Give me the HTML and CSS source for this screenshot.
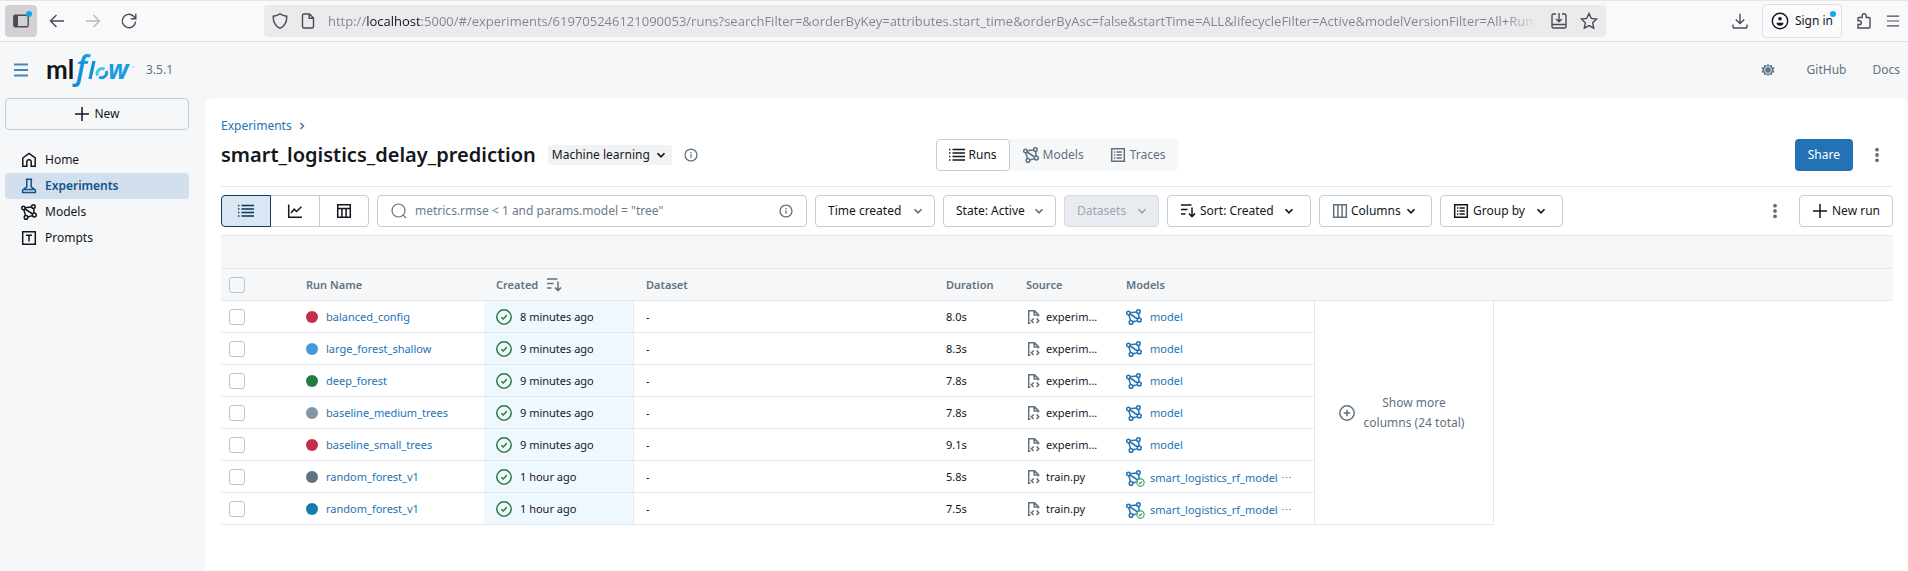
FILE: index.html
```html
<!DOCTYPE html>
<html lang="en">
<head>
<meta charset="utf-8">
<title>smart_logistics_delay_prediction - MLflow</title>
<link rel="stylesheet" href="styles.css">
</head>
<body>
<svg class="defs" aria-hidden="true">
  <symbol id="plus" viewBox="0 0 16 16"><path d="M8 1v14M1 8h14"/></symbol>
  <symbol id="home" viewBox="0 0 16 16"><path d="M1.8 6 8 1.5 14.2 6v8.2H10.2V10a2.2 2.2 0 0 0-4.4 0v4.2H1.8z"/></symbol>
  <symbol id="flask" viewBox="0 0 16 16"><path d="M4.8 1.2h6.4M5.8 1.5v7.3L1.6 12v2.4h12.8V12l-4.200-3.200V1.5M1.8 11.500h12.4"/></symbol>
  <symbol id="models" viewBox="0 0 16 16"><circle cx="2.4" cy="4" r="1.7"/><circle cx="12.4" cy="2.6" r="1.8"/><circle cx="13.3" cy="11" r="1.9"/><circle cx="5" cy="13.4" r="1.8"/><path d="M4.2 3.8 10.6 2.9M12.6 4.4l.5 4.7M11.5 11.6 6.7 13M4.6 11.6 2.8 5.8M3.9 5 11.7 10"/></symbol>
  <symbol id="prompt" viewBox="0 0 16 16"><path d="M1.7 1.7h12.6v12.6H1.7zM5 5.2h6M8 5.2V11.5"/></symbol>
  <symbol id="list" viewBox="0 0 16 16"><path d="M3.5 2.5H16M3.5 6H16M3.5 9.5H16M3.5 13H16M0 2.5h1.4M0 6h1.4M0 9.5h1.4M0 13h1.4"/></symbol>
  <symbol id="chart" viewBox="0 0 16 16"><path d="M1.7 1.5v12.8H15M4 10l3.2-3.8L9.5 8.5 14.5 3.8"/></symbol>
  <symbol id="grid" viewBox="0 0 16 16"><path d="M1.7 1.7h12.6v12.6H1.7zM1.7 5.5h12.6M5.9 5.5v8.8M10.1 5.5v8.8"/></symbol>
  <symbol id="columns" viewBox="0 0 16 16"><path d="M1.7 1.7h12.6v12.6H1.7zM5.9 1.7v12.6M10.1 1.7v12.6"/></symbol>
  <symbol id="listbox" viewBox="0 0 16 16"><path d="M1.7 1.7h12.6v12.6H1.7zM6.5 5h5.3M6.5 8h5.3M6.5 11h5.3M4 5h1.3M4 8h1.3M4 11h1.3"/></symbol>
  <symbol id="sort" viewBox="0 0 16 16"><path d="M1 2h10.5M1 6.5h6.5M1 11h4.5M12 4.5v9M8.9 10.4 12 13.6l3.1-3.2"/></symbol>
  <symbol id="search" viewBox="0 0 16 16"><circle cx="7.5" cy="7.5" r="6.5"/><path d="m12.2 12.2 2.9 2.9"/></symbol>
  <symbol id="info" viewBox="0 0 16 16"><circle cx="8" cy="8" r="6.8"/><path d="M8 7.2v4M8 4.6v1.5"/></symbol>
  <symbol id="down" viewBox="0 0 16 16"><path d="m4 6 4 4 4-4"/></symbol>
  <symbol id="right" viewBox="0 0 16 16"><path d="m6 4 4 4-4 4"/></symbol>
  <symbol id="kebab" viewBox="0 0 16 16"><g fill="currentColor" stroke="none"><circle cx="8" cy="2.7" r="1.9"/><circle cx="8" cy="8" r="1.9"/><circle cx="8" cy="13.3" r="1.9"/></g></symbol>
  <symbol id="check" viewBox="0 0 16 16"><circle cx="8" cy="8" r="7.2"/><path d="m5.3 8.2 1.9 1.8 3.6-3.7"/></symbol>
  <symbol id="file" viewBox="0 0 16 16"><path d="M4.5 14.2H2.7V1.7h5.8L12.5 5.6V7.5M8.2 1.9v4h4M7.6 9.5 5.4 11.8l2.2 2.3M10.6 9.5l2.2 2.3-2.2 2.3"/></symbol>
  <symbol id="pluscircle" viewBox="0 0 16 16"><circle cx="8" cy="8" r="7.2"/><path d="M8 4.7v6.6M4.7 8h6.6"/></symbol>
  <symbol id="badge" viewBox="0 0 16 16"><circle cx="8" cy="8" r="6.5" fill="#fff"/><path d="m5 8.2 2.2 2L11 6"/></symbol>
  <symbol id="menu" viewBox="0 0 16 16"><path d="M1 2.5h14M1 8h14M1 13.5h14"/></symbol>
  <symbol id="gear" viewBox="0 0 16 16"><g fill="currentColor" stroke="none"><path d="m8 .8 1.7 2.3 2.7-1.2.3 2.9 2.9.4L14.1 8l1.5 2.7-2.9.4-.3 3-2.7-1.2L8 15.2l-1.7-2.3-2.7 1.2-.3-3-2.9-.4L1.9 8 .4 5.2l2.9-.4.3-2.9 2.7 1.2z"/></g><circle cx="8" cy="8" r="3.9" stroke="#f6f7f9" stroke-width="1"/></symbol>
</svg>

<header class="browser">
  <button class="tool tool-on" aria-label="Sidebars"><svg class="ic20" viewBox="0 0 20 20"><rect x="2.8" y="4.2" width="14.4" height="11.6" rx="1.6"/><path class="solid" d="M3 4.5h4v11H3z"/></svg><span class="dot"></span></button>
  <button class="tool" aria-label="Back"><svg class="ic16" viewBox="0 0 16 16"><path d="M15 8H1.5M7.5 2l-6 6 6 6"/></svg></button>
  <button class="tool tool-off" aria-label="Forward" disabled><svg class="ic16" viewBox="0 0 16 16"><path d="M1 8h13.5M8.5 2l6 6-6 6"/></svg></button>
  <button class="tool" aria-label="Reload"><svg class="ic16" viewBox="0 0 16 16"><path d="M14.6 8.6A6.7 6.7 0 1 1 12.6 3.2L14.6 5.2M14.8.8v5H9.8"/></svg></button>
  <div class="address">
    <svg class="ic16" viewBox="0 0 16 16"><path d="M8 .8C6 2.5 3.8 3 1.2 3.2 1.1 9 3.2 13 8 15.3 12.8 13 14.9 9 14.8 3.2 12.2 3 10 2.5 8 .8z"/></svg>
    <svg class="ic16" viewBox="0 0 16 16"><path d="M2.5 2.5A1.5 1.5 0 0 1 4 1h5.5l4 4v8.5A1.5 1.5 0 0 1 12 15H4a1.5 1.5 0 0 1-1.5-1.5zM9.2 1v4.3h4.3"/></svg>
    <input class="url" type="text" aria-label="Address" value="http://localhost:5000/#/experiments/619705246121090053/runs?searchFilter=&amp;orderByKey=attributes.start_time&amp;orderByAsc=false&amp;startTime=ALL&amp;lifecycleFilter=Active&amp;modelVersionFilter=All+Runs">
    <button class="bare" aria-label="Install page"><svg class="ic18" viewBox="0 0 18 18"><path d="M6 2H3.5A1.5 1.5 0 0 0 2 3.5v11A1.5 1.5 0 0 0 3.5 16h11a1.5 1.5 0 0 0 1.5-1.5v-11A1.5 1.5 0 0 0 14.5 2H12M2 12.5h14M9 1v8.5M6.2 7 9 9.7 11.8 7"/></svg></button>
    <button class="bare" aria-label="Bookmark"><svg class="ic18" viewBox="0 0 18 18"><path d="m9 1.5 2.3 4.9 5.3.7-3.9 3.7 1 5.4L9 13.6l-4.7 2.6 1-5.4L1.4 7.1l5.3-.7z"/></svg></button>
  </div>
  <div class="browser-end">
    <button class="bare" aria-label="Downloads"><svg class="ic16" viewBox="0 0 16 16"><path d="M8 .8v9.7M3.8 6.5 8 10.6l4.2-4.1M1 11.5v2.3A1.2 1.2 0 0 0 2.2 15h11.6a1.2 1.2 0 0 0 1.2-1.2v-2.3"/></svg></button>
    <button class="signin"><svg class="ic18" viewBox="0 0 18 18"><circle cx="9" cy="9" r="7.7"/><circle class="solid" cx="9" cy="6.7" r="1.8"/><path class="solid" d="M5.5 10.8h7c0 2-1.5 3-3.5 3s-3.5-1-3.5-3z"/></svg>Sign in<span class="dot"></span></button>
    <button class="bare" aria-label="Extensions"><svg class="ic16" viewBox="0 0 16 16"><path d="M2 15h11a1 1 0 0 0 1-1V5.5a1 1 0 0 0-1-1h-2.8V2.8a2 2 0 0 0-4 0v1.7H3a1 1 0 0 0-1 1v2.3h1.5a1.800 1.800 0 0 1 0 3.700H2z"/></svg></button>
    <button class="bare" aria-label="Menu"><svg class="ic14"><use href="#menu"/></svg></button>
  </div>
</header>

<div class="app">
  <header class="topbar">
    <button class="bare burger" aria-label="Toggle sidebar"><svg class="ic16 heavy"><use href="#menu"/></svg></button>
    <a class="logo" href="#" aria-label="MLflow home"><svg width="90" height="36" viewBox="0 0 90 36">
      <defs><linearGradient id="fl" x1="0" x2="1"><stop offset="0" stop-color="#0b86d1"/><stop offset="1" stop-color="#1aa3e6"/></linearGradient></defs>
      <text class="logo-ml" x="-1" y="27">ml</text>
      <text class="logo-f" x="29" y="27">f</text>
      <path d="M47 9 43 27" stroke="#0f8fdb" stroke-width="3.3"/>
      <path d="M50.500 23.500a5 5 0 0 1 7-6.300" stroke="#43c9ed" stroke-width="3"/>
      <path d="M59.300 19a5 5 0 0 1-7.200 6" stroke="#1b9be2" stroke-width="3"/>
      <text class="logo-w" x="61" y="27">w</text>
      <path d="M85 15h2.500" stroke="#8ed0f0" stroke-width="1"/>
    </svg></a>
    <span class="version">3.5.1</span>
    <nav class="toplinks">
      <button class="bare" aria-label="Settings"><svg class="ic14"><use href="#gear"/></svg></button>
      <a href="#">GitHub</a>
      <a href="#">Docs</a>
    </nav>
  </header>

  <div class="body">
    <aside class="side">
      <button class="btn new"><svg class="ic16 bold"><use href="#plus"/></svg>New</button>
      <nav class="nav">
        <a href="#"><svg class="ic16 bold"><use href="#home"/></svg>Home</a>
        <a href="#" class="current"><svg class="ic16 bold"><use href="#flask"/></svg>Experiments</a>
        <a href="#"><svg class="ic16 bold"><use href="#models"/></svg>Models</a>
        <a href="#"><svg class="ic16 bold"><use href="#prompt"/></svg>Prompts</a>
      </nav>
    </aside>

    <main class="panel">
      <nav class="crumbs"><a href="#">Experiments</a><svg class="ic12 heavy"><use href="#right"/></svg></nav>
      <div class="titlebar">
        <div class="title">
          <h1>smart_logistics_delay_prediction</h1>
          <button class="kind">Machine learning<svg class="ic14 heavy"><use href="#down"/></svg></button>
          <button class="bare muted" aria-label="About this experiment"><svg class="ic14 bold"><use href="#info"/></svg></button>
        </div>
        <nav class="tabs">
          <a href="#" class="tab tab-on"><svg class="ic16 bold"><use href="#list"/></svg>Runs</a>
          <a href="#" class="tab"><svg class="ic16 bold"><use href="#models"/></svg>Models</a>
          <a href="#" class="tab"><svg class="ic16 bold"><use href="#listbox"/></svg>Traces</a>
        </nav>
        <div class="actions">
          <button class="share">Share</button>
          <button class="bare muted" aria-label="More actions"><svg class="ic16"><use href="#kebab"/></svg></button>
        </div>
      </div>

      <div class="toolbar">
        <div class="segments">
          <button class="seg seg-on" aria-label="List view"><svg class="ic16 bold"><use href="#list"/></svg></button>
          <button class="seg" aria-label="Chart view"><svg class="ic16 bold"><use href="#chart"/></svg></button>
          <button class="seg" aria-label="Artifact view"><svg class="ic16 bold"><use href="#grid"/></svg></button>
        </div>
        <div class="search">
          <svg class="ic16"><use href="#search"/></svg>
          <input type="text" aria-label="Search runs" placeholder='metrics.rmse &lt; 1 and params.model = "tree"'>
          <button class="bare muted" aria-label="Search help"><svg class="ic14 bold"><use href="#info"/></svg></button>
        </div>
        <div class="pick pick-time"><select aria-label="Time"><option>Time created</option></select><svg class="ic14 heavy"><use href="#down"/></svg></div>
        <div class="pick pick-state"><select aria-label="State"><option>State: Active</option></select><svg class="ic14 heavy"><use href="#down"/></svg></div>
        <div class="pick pick-data"><select aria-label="Datasets" disabled><option>Datasets</option></select><svg class="ic14 heavy"><use href="#down"/></svg></div>
        <button class="btn sortby"><svg class="ic16 bold"><use href="#sort"/></svg>Sort: Created<svg class="ic14 heavy end"><use href="#down"/></svg></button>
        <button class="btn cols"><svg class="ic16 bold tint"><use href="#columns"/></svg>Columns<svg class="ic14 heavy"><use href="#down"/></svg></button>
        <button class="btn groupby"><svg class="ic16 bold"><use href="#listbox"/></svg>Group by<svg class="ic14 heavy end"><use href="#down"/></svg></button>
        <div class="toolbar-end">
          <button class="bare muted" aria-label="More options"><svg class="ic16"><use href="#kebab"/></svg></button>
          <button class="btn"><svg class="ic16 bold"><use href="#plus"/></svg>New run</button>
        </div>
      </div>

      <table class="runs">
        <colgroup><col class="c-check"><col class="c-name"><col class="c-created"><col class="c-dataset"><col class="c-duration"><col class="c-source"><col class="c-models"><col class="c-more"><col></colgroup>
        <thead>
          <tr><td colspan="9"></td></tr>
          <tr>
            <th><input type="checkbox" aria-label="Select all runs"></th>
            <th>Run Name</th>
            <th><span class="cell">Created<svg class="ic16 bold"><use href="#sort"/></svg></span></th>
            <th>Dataset</th><th>Duration</th><th>Source</th><th>Models</th><th></th><th></th>
          </tr>
        </thead>
        <tbody>
          <tr>
            <td><input type="checkbox" aria-label="Select balanced_config"></td>
            <td><span class="cell"><i class="swatch red"></i><a href="#">balanced_config</a></span></td>
            <td class="sorted"><span class="cell"><svg class="ic16 bold ok"><use href="#check"/></svg>8 minutes ago</span></td>
            <td>-</td><td>8.0s</td>
            <td><span class="cell src"><svg class="ic16 bold"><use href="#file"/></svg>experim...</span></td>
            <td><a href="#" class="cell"><span class="mi"><svg class="ic16 bold"><use href="#models"/></svg></span>model</a></td>
            <td class="more" rowspan="7"><button class="showmore"><svg class="ic16 bold"><use href="#pluscircle"/></svg><span>Show more columns (24 total)</span></button></td>
            <td class="rest" rowspan="7"></td>
          </tr>
          <tr>
            <td><input type="checkbox" aria-label="Select large_forest_shallow"></td>
            <td><span class="cell"><i class="swatch sky"></i><a href="#">large_forest_shallow</a></span></td>
            <td class="sorted"><span class="cell"><svg class="ic16 bold ok"><use href="#check"/></svg>9 minutes ago</span></td>
            <td>-</td><td>8.3s</td>
            <td><span class="cell src"><svg class="ic16 bold"><use href="#file"/></svg>experim...</span></td>
            <td><a href="#" class="cell"><span class="mi"><svg class="ic16 bold"><use href="#models"/></svg></span>model</a></td>
          </tr>
          <tr>
            <td><input type="checkbox" aria-label="Select deep_forest"></td>
            <td><span class="cell"><i class="swatch green"></i><a href="#">deep_forest</a></span></td>
            <td class="sorted"><span class="cell"><svg class="ic16 bold ok"><use href="#check"/></svg>9 minutes ago</span></td>
            <td>-</td><td>7.8s</td>
            <td><span class="cell src"><svg class="ic16 bold"><use href="#file"/></svg>experim...</span></td>
            <td><a href="#" class="cell"><span class="mi"><svg class="ic16 bold"><use href="#models"/></svg></span>model</a></td>
          </tr>
          <tr>
            <td><input type="checkbox" aria-label="Select baseline_medium_trees"></td>
            <td><span class="cell"><i class="swatch grey"></i><a href="#">baseline_medium_trees</a></span></td>
            <td class="sorted"><span class="cell"><svg class="ic16 bold ok"><use href="#check"/></svg>9 minutes ago</span></td>
            <td>-</td><td>7.8s</td>
            <td><span class="cell src"><svg class="ic16 bold"><use href="#file"/></svg>experim...</span></td>
            <td><a href="#" class="cell"><span class="mi"><svg class="ic16 bold"><use href="#models"/></svg></span>model</a></td>
          </tr>
          <tr>
            <td><input type="checkbox" aria-label="Select baseline_small_trees"></td>
            <td><span class="cell"><i class="swatch red"></i><a href="#">baseline_small_trees</a></span></td>
            <td class="sorted"><span class="cell"><svg class="ic16 bold ok"><use href="#check"/></svg>9 minutes ago</span></td>
            <td>-</td><td>9.1s</td>
            <td><span class="cell src"><svg class="ic16 bold"><use href="#file"/></svg>experim...</span></td>
            <td><a href="#" class="cell"><span class="mi"><svg class="ic16 bold"><use href="#models"/></svg></span>model</a></td>
          </tr>
          <tr>
            <td><input type="checkbox" aria-label="Select random_forest_v1"></td>
            <td><span class="cell"><i class="swatch slate"></i><a href="#">random_forest_v1</a></span></td>
            <td class="sorted"><span class="cell"><svg class="ic16 bold ok"><use href="#check"/></svg>1 hour ago</span></td>
            <td>-</td><td>5.8s</td>
            <td><span class="cell src"><svg class="ic16 bold"><use href="#file"/></svg>train.py</span></td>
            <td><a href="#" class="cell reg"><span class="mi"><svg class="ic16 bold"><use href="#models"/></svg><svg class="badge"><use href="#badge"/></svg></span>smart_logistics_rf_model ⋯</a></td>
          </tr>
          <tr>
            <td><input type="checkbox" aria-label="Select random_forest_v1"></td>
            <td><span class="cell"><i class="swatch blue"></i><a href="#">random_forest_v1</a></span></td>
            <td class="sorted"><span class="cell"><svg class="ic16 bold ok"><use href="#check"/></svg>1 hour ago</span></td>
            <td>-</td><td>7.5s</td>
            <td><span class="cell src"><svg class="ic16 bold"><use href="#file"/></svg>train.py</span></td>
            <td><a href="#" class="cell reg"><span class="mi"><svg class="ic16 bold"><use href="#models"/></svg><svg class="badge"><use href="#badge"/></svg></span>smart_logistics_rf_model ⋯</a></td>
          </tr>
        </tbody>
      </table>
    </main>
  </div>
</div>
</body>
</html>
```
FILE: styles.css
```css
* { box-sizing: border-box; }
body {
  margin: 0;
  min-height: 100vh;
  display: flex;
  flex-direction: column;
  font-family: "Noto Sans", "Open Sans", sans-serif;
  font-size: 12px;
  line-height: 20px;
  color: #11171c;
  background: #f6f7f9;
}
a { color: inherit; text-decoration: none; }
button, input, select { font: inherit; color: inherit; margin: 0; }
button { cursor: pointer; }
svg { fill: none; stroke: currentColor; stroke-width: 1.2; flex: none; overflow: visible; }
.defs { position: absolute; width: 0; height: 0; }
.solid { fill: currentColor; stroke: none; }
.bold { stroke-width: 1.5; }
.heavy { stroke-width: 2; }
.ic12 { width: 12px; height: 12px; }
.ic14 { width: 14px; height: 14px; }
.ic16 { width: 16px; height: 16px; }
.ic18 { width: 18px; height: 18px; }
.ic20 { width: 20px; height: 20px; }
.bare { display: flex; padding: 0; border: 0; background: none; }
.muted { color: #5f7281; }

/* Browser chrome */
.browser {
  display: flex;
  align-items: center;
  gap: 4px;
  height: 42px;
  padding: 0 8px 0 5px;
  background: #f9f9fb;
  border-top: 1px solid #e6e6e9;
  border-bottom: 1px solid #dcdce0;
  color: #4b4b52;
}
.browser svg { stroke-width: 1.4; }
.tool {
  position: relative;
  display: grid;
  place-items: center;
  width: 32px;
  height: 32px;
  padding: 0;
  border: 0;
  border-radius: 4px;
  background: none;
}
.tool-on { background: #d2d2d5; }
.tool-off { color: #b8b8bd; }
.dot {
  position: absolute;
  top: 6px;
  right: 5px;
  width: 6px;
  height: 6px;
  border-radius: 50%;
  background: #12a8ee;
}
.address {
  display: flex;
  align-items: center;
  gap: 12px;
  flex: 1;
  height: 32px;
  margin-left: 115px;
  padding: 0 8px;
  border-radius: 4px;
  background: #ebebee;
}
.url {
  flex: 1;
  min-width: 0;
  height: 24px;
  padding: 0;
  border: 0;
  outline: 0;
  font-family: "Open Sans", sans-serif;
  font-size: 13px;
  color: transparent;
  background: linear-gradient(90deg, #82828a 0 38px, #15141a 38px 93px, #82828a 93px calc(100% - 32px), transparent);
  -webkit-background-clip: text;
  background-clip: text;
}
.browser-end { display: flex; align-items: center; gap: 14px; margin-left: 122px; }
.signin {
  position: relative;
  display: flex;
  align-items: center;
  gap: 6px;
  height: 34px;
  padding: 0 8px;
  border: 1px solid #e0e0e4;
  border-radius: 4px;
  background: #fbfbfd;
  color: #15141a;
}

/* Application header */
.app { flex: 1; display: flex; flex-direction: column; }
.topbar { display: flex; align-items: center; height: 56px; padding: 0 8px 0 13px; color: #5f7281; }
.burger { color: #4587bd; }
.logo { display: flex; margin-left: 18px; }
.logo text { stroke: none; font-family: "Open Sans", sans-serif; font-weight: 600; }
.logo .logo-ml { font-family: Lato, sans-serif; font-weight: 700; font-size: 26px; fill: #11171c; }
.logo .logo-f { font-size: 32px; font-style: italic; fill: url(#fl); }
.logo .logo-w { font-size: 26px; font-style: italic; font-weight: 700; fill: #1b9be2; }
.version { margin-left: 9px; }
.toplinks { display: flex; align-items: center; gap: 26px; margin-left: auto; }
.toplinks button { margin-right: 6px; }

/* Sidebar */
.body { flex: 1; display: flex; }
.side { width: 205px; padding: 0 16px 0 5px; }
.btn {
  display: flex;
  align-items: center;
  gap: 4px;
  height: 32px;
  padding: 0 12px;
  border: 1px solid #c0cdd8;
  border-radius: 4px;
  background: #fff;
  white-space: nowrap;
}
.new { width: 100%; justify-content: center; background: none; }
.nav { display: flex; flex-direction: column; margin-top: 17px; }
.nav a { display: flex; align-items: center; gap: 8px; height: 26px; padding: 0 16px; border-radius: 4px; }
.nav .current { background: #d2e0ed; color: #0e538b; font-weight: 600; }

/* Experiment page */
.panel {
  flex: 1;
  min-width: 0;
  padding: 18px 15px 0 16px;
  border-radius: 8px 8px 0 0;
  background: #fff;
}
.crumbs { display: flex; align-items: center; gap: 4px; color: #2272b4; }
.crumbs svg { color: #5f7281; }
.titlebar {
  display: grid;
  grid-template-columns: 1fr auto 1fr;
  align-items: center;
  height: 51px;
  padding-bottom: 13px;
  border-bottom: 1px solid #e4e8ec;
}
.title { display: flex; align-items: center; gap: 12px; }
h1 { margin: 0; font-size: 20px; line-height: 28px; font-weight: 600; }
.kind {
  display: flex;
  align-items: center;
  gap: 4px;
  height: 20px;
  padding: 0 4px;
  border: 0;
  border-radius: 3px;
  background: #f1f2f4;
  white-space: nowrap;
}
.tabs { display: flex; border-radius: 4px; background: #f6f7f9; color: #5f7281; }
.tab { display: flex; align-items: center; gap: 4px; height: 32px; padding: 0 12px; border: 1px solid transparent; border-radius: 4px; }
.tab-on { border-color: #c0cdd8; background: #fff; color: #11171c; }
.actions { display: flex; align-items: center; gap: 16px; justify-content: flex-end; padding-right: 8px; }
.share { height: 32px; padding: 0 13px; border: 0; border-radius: 4px; background: #2272b4; color: #fff; }

.toolbar { display: flex; gap: 8px; padding: 8px 0; }
.segments { display: flex; }
.seg {
  display: grid;
  place-items: center;
  width: 50px;
  height: 32px;
  margin-right: -1px;
  padding: 0;
  border: 1px solid #c0cdd8;
  background: #fff;
}
.seg:last-child { margin-right: 0; border-radius: 0 4px 4px 0; }
.seg-on { border-color: #0e3c66; border-radius: 4px 0 0 4px; background: #dae7f3; color: #04355d; z-index: 1; }
.search {
  display: flex;
  align-items: center;
  gap: 8px;
  flex: 0 1 430px;
  height: 32px;
  padding: 0 13px;
  border: 1px solid #c0cdd8;
  border-radius: 4px;
  color: #5f7281;
}
.search input { flex: 1; min-width: 0; padding: 0; border: 0; outline: 0; background: none; }
.search input::placeholder { color: #6b7c8a; }
.pick { position: relative; }
.pick select {
  width: 100%;
  height: 32px;
  padding: 0 30px 0 12px;
  border: 1px solid #c0cdd8;
  border-radius: 4px;
  background: #fff;
  appearance: none;
}
.pick svg { position: absolute; top: 9px; right: 10px; color: #5f7281; pointer-events: none; }
.pick-time { width: 120px; }
.pick-state { width: 113px; }
.pick-data { width: 95px; }
.pick select:disabled { background: #e8ecf0; border-color: #d3dae1; color: #9aa7b2; opacity: 1; }
.pick-data svg { color: #9aa7b2; }
.sortby { width: 144px; }
.cols { width: 113px; gap: 3px; }
.groupby { width: 123px; }
.end { margin: 0 2px 0 auto; }
.tint { color: #5f7281; }
.toolbar-end { display: flex; align-items: center; gap: 16px; margin-left: auto; }

/* Runs table */
.runs { width: 100%; table-layout: fixed; border-collapse: separate; border-spacing: 0; font-size: 11px; }
.c-check { width: 73px; }
.c-name { width: 190px; }
.c-created { width: 150px; }
.c-dataset { width: 300px; }
.c-duration { width: 80px; }
.c-source { width: 100px; }
.c-models { width: 200px; }
.c-more { width: 180px; }
.runs th, .runs td { height: 32px; padding: 0 0 0 12px; border-bottom: 1px solid #e4e8ec; text-align: left; white-space: nowrap; }
.runs th:first-child, .runs td:first-child { padding-left: 8px; }
.runs thead { background: #f6f7f9; color: #5f7281; }
.runs thead td { height: 34px; border-top: 1px solid #e4e8ec; }
.runs th { font-weight: 600; }
.runs a { color: #2272b4; }
.runs .sorted { background: #f0f8ff; border-right: 1px solid #e0eaf3; }
.runs .more { padding: 0; border-left: 1px solid #e4e8ec; border-right: 1px solid #e4e8ec; }
.runs .rest { border: 0; }
.cell { display: flex; align-items: center; gap: 8px; }
.reg { padding-top: 2px; }
.src { gap: 4px; }
.src svg { color: #5f7281; }
.mi { position: relative; display: flex; }
.badge { position: absolute; right: -3px; bottom: -1px; width: 9px; height: 9px; stroke-width: 2; color: #3ba65e; }
.ok { color: #277c43; }
.swatch { width: 12px; height: 12px; border-radius: 50%; }
.red { background: #c82d4c; }
.sky { background: #4299e0; }
.green { background: #277c43; }
.grey { background: #8396a5; }
.slate { background: #5f7281; }
.blue { background: #137dae; }
.runs input {
  display: block;
  width: 16px;
  height: 16px;
  border: 1px solid #b9c6d1;
  border-radius: 3px;
  background: transparent;
  appearance: none;
}
.showmore {
  display: flex;
  align-items: center;
  justify-content: center;
  gap: 4px;
  width: 100%;
  padding: 0 24px;
  border: 0;
  background: none;
  color: #5f7281;
  font-size: 12px;
  white-space: normal;
}
```
